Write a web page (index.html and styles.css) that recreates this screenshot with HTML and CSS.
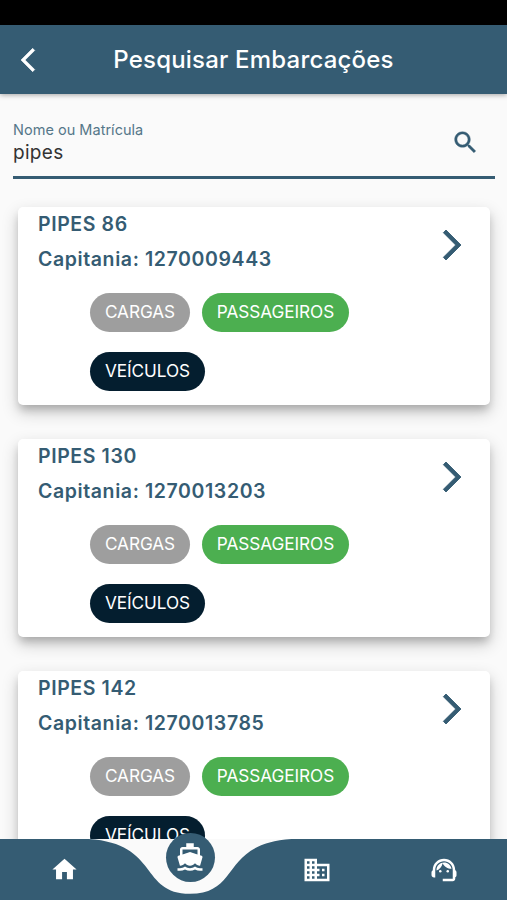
FILE: index.html
```html
<!DOCTYPE html>
<html lang="pt-BR">
<head>
<meta charset="utf-8">
<title>Pesquisar Embarcações</title>
<link rel="stylesheet" href="styles.css">
</head>
<body>
<svg class="sprite" aria-hidden="true">
  <symbol id="chevron" viewBox="0 0 24 24"><path d="M6.23 20.23L8 22l10-10L8 2 6.23 3.77 14.46 12z"/></symbol>
</svg>
<div class="app">
  <div class="status"></div>
  <header class="bar">
    <svg class="back" viewBox="0 0 24 24"><path d="M17.77 3.77L16 2 6 12l10 10 1.77-1.77L9.54 12z"/></svg>
    <h1 class="title">Pesquisar Embarcações</h1>
  </header>
  <main class="content">
    <div class="field">
      <div class="entry">
        <div class="label">Nome ou Matrícula</div>
        <div class="value">pipes</div>
      </div>
      <svg class="search" viewBox="0 0 24 24"><path d="M15.5 14h-.79l-.28-.27C15.41 12.59 16 11.11 16 9.5 16 5.91 13.09 3 9.5 3S3 5.91 3 9.5 5.91 16 9.5 16c1.61 0 3.09-.59 4.23-1.57l.27.28v.79l5 4.99L20.49 19l-4.99-5zm-6 0C7.01 14 5 11.99 5 9.5S7.01 5 9.5 5 14 7.01 14 9.5 11.99 14 9.5 14z"/></svg>
    </div>
    <section class="list">
      <article class="card">
        <div class="name">PIPES 86</div>
        <div class="port">Capitania: 1270009443</div>
        <div class="chips"><span class="chip cargo">CARGAS</span><span class="chip people">PASSAGEIROS</span><span class="chip cars">VEÍCULOS</span></div>
        <svg class="go"><use href="#chevron"/></svg>
      </article>
      <article class="card">
        <div class="name">PIPES 130</div>
        <div class="port">Capitania: 1270013203</div>
        <div class="chips"><span class="chip cargo">CARGAS</span><span class="chip people">PASSAGEIROS</span><span class="chip cars">VEÍCULOS</span></div>
        <svg class="go"><use href="#chevron"/></svg>
      </article>
      <article class="card">
        <div class="name">PIPES 142</div>
        <div class="port">Capitania: 1270013785</div>
        <div class="chips"><span class="chip cargo">CARGAS</span><span class="chip people">PASSAGEIROS</span><span class="chip cars">VEÍCULOS</span></div>
        <svg class="go"><use href="#chevron"/></svg>
      </article>
    </section>
  </main>
  <nav class="nav">
    <svg class="wave" viewBox="0 0 507 61"><path d="M0 0H88.7C159.7 4.5 139.4 54.8 190.1 54.8S220.5 4.5 291.5 0H507V61H0z"/></svg>
    <div class="tabs">
      <div class="tab"><svg class="home" viewBox="0 0 24 24"><path d="M10 20v-6h4v6h5v-8h3L12 3 2 12h3v8z"/></svg></div>
      <div class="tab active"><div class="bubble"><svg viewBox="0 0 24 24"><path d="M20 21c-1.39 0-2.78-.47-4-1.32-2.44 1.71-5.56 1.71-8 0C6.78 20.53 5.39 21 4 21H2v2h2c1.38 0 2.74-.35 4-.99 2.52 1.29 5.48 1.29 8 0 1.26.65 2.62.99 4 .99h2v-2h-2zM3.95 19H4c1.6 0 3.02-.88 4-2 .98 1.12 2.4 2 4 2s3.02-.88 4-2c.98 1.12 2.4 2 4 2h.05l1.89-6.68c.08-.26.06-.54-.06-.78s-.34-.42-.6-.5L20 10.62V6c0-1.1-.9-2-2-2h-3V1H9v3H6c-1.1 0-2 .9-2 2v4.62l-1.29.42c-.26.08-.48.26-.6.5s-.15.52-.06.78L3.95 19zM6 6h12v3.97L12 8 6 9.97V6z"/></svg></div></div>
      <div class="tab"><svg viewBox="0 0 24 24"><path d="M12 7V3H2v18h20V7H12zM6 19H4v-2h2v2zm0-4H4v-2h2v2zm0-4H4V9h2v2zm0-4H4V5h2v2zm4 12H8v-2h2v2zm0-4H8v-2h2v2zm0-4H8V9h2v2zm0-4H8V5h2v2zm10 12h-8v-2h2v-2h-2v-2h2v-2h-2V9h8v10zm-2-8h-2v2h2v-2zm0 4h-2v2h2v-2z"/></svg></div>
      <div class="tab"><svg viewBox="0 0 24 24"><path d="M21 12.22C21 6.73 16.74 3 12 3c-4.69 0-9 3.65-9 9.28-.6.34-1 .98-1 1.72v2c0 1.1.9 2 2 2h1v-6.1c0-3.87 3.13-7 7-7s7 3.13 7 7V19h-8v2h8c1.1 0 2-.9 2-2v-1.22c.59-.31 1-.92 1-1.64v-2.3c0-.7-.41-1.31-1-1.62z"/><circle cx="9" cy="13" r="1"/><circle cx="15" cy="13" r="1"/><path d="M18 11.03C17.52 8.18 15.04 6 12.05 6c-3.03 0-6.29 2.51-6.03 6.45 2.47-1.01 4.33-3.21 4.86-5.89 1.31 2.63 4 4.44 7.12 4.47z"/></svg></div>
    </div>
  </nav>
</div>
</body>
</html>
```
FILE: styles.css
```css
* { box-sizing: border-box; }
body { margin: 0; font-family: Inter, "Liberation Sans", sans-serif; }
svg { display: block; flex: none; fill: currentColor; }
.sprite { position: absolute; width: 0; height: 0; }
.app {
  width: 507px; height: 900px; overflow: hidden;
  display: flex; flex-direction: column;
  background: #fafafa; color: #355c73;
}
.status { height: 25px; flex: none; background: #000; }
.bar {
  height: 69px; flex: none; position: relative; z-index: 1;
  display: flex; align-items: center; padding-left: 13.5px;
  background: #355c73; color: #fff;
  box-shadow: 0 1px 5px rgba(0, 0, 0, .35);
}
.back { width: 28px; height: 28px; stroke: currentColor; stroke-width: .5; }
.title {
  flex: 1; margin: 0 41.5px 0 0; text-align: center; white-space: nowrap;
  font-size: 24px; line-height: 30px; font-weight: 500; letter-spacing: .2px;
}
.content { flex: 1; min-height: 0; overflow: hidden; }
.field {
  height: 85px; margin: 0 12px 0 13px; padding: 27px 15px 0 0;
  display: flex; justify-content: space-between;
  border-bottom: 3px solid #355c73;
}
.search { width: 29px; height: 29px; margin-top: 6.5px; stroke: currentColor; stroke-width: .3; }
.label { font-size: 14.5px; line-height: 18px; letter-spacing: .02px; color: #557789; }
.value { font-size: 19px; line-height: 27px; letter-spacing: .3px; color: #333; }
.list { display: flex; flex-direction: column; gap: 34px; padding: 28px 17px 0 18px; }
.card {
  height: 198px; flex: none; position: relative; padding: 5px 20px 0;
  background: #fff; border-radius: 5px;
  box-shadow: 0 6px 8px -2px rgba(0, 0, 0, .2), 0 7px 16px 1px rgba(0, 0, 0, .18);
}
.name, .port { font-size: 19.5px; line-height: 24px; font-weight: 600; letter-spacing: .6px; white-space: nowrap; }
.port { margin-top: 11px; }
.chips { display: flex; flex-wrap: wrap; gap: 20px 12px; width: 300px; margin: 22px 0 0 52px; }
.chip {
  height: 39px; border-radius: 20px; color: #fff;
  font-size: 17.2px; line-height: 38px; letter-spacing: -.05px; white-space: nowrap; text-align: center;
}
.cargo { width: 100px; background: #9e9e9e; }
.people { width: 147px; background: #4caf50; }
.cars { width: 115px; background: #041e2f; }
.go { position: absolute; right: 20.5px; top: 20px; width: 36px; height: 36px; stroke: currentColor; stroke-width: .6; }
.nav { height: 61px; flex: none; position: relative; background: #fafafa; color: #fff; }
.wave { width: 507px; height: 61px; color: #355c73; }
.tabs { position: absolute; inset: 0; display: flex; }
.tab { flex: 1; display: flex; justify-content: center; padding: 15.5px 0 0 .5px; }
.tab svg { width: 30px; height: 30px; }
.tab .home { width: 29px; height: 29px; margin-left: 1px; }
.tab.active { padding-top: 0; }
.bubble {
  width: 49px; height: 49px; margin-top: -6.5px; border-radius: 50%;
  display: flex; align-items: center; justify-content: center; background: #355c73;
}
```
